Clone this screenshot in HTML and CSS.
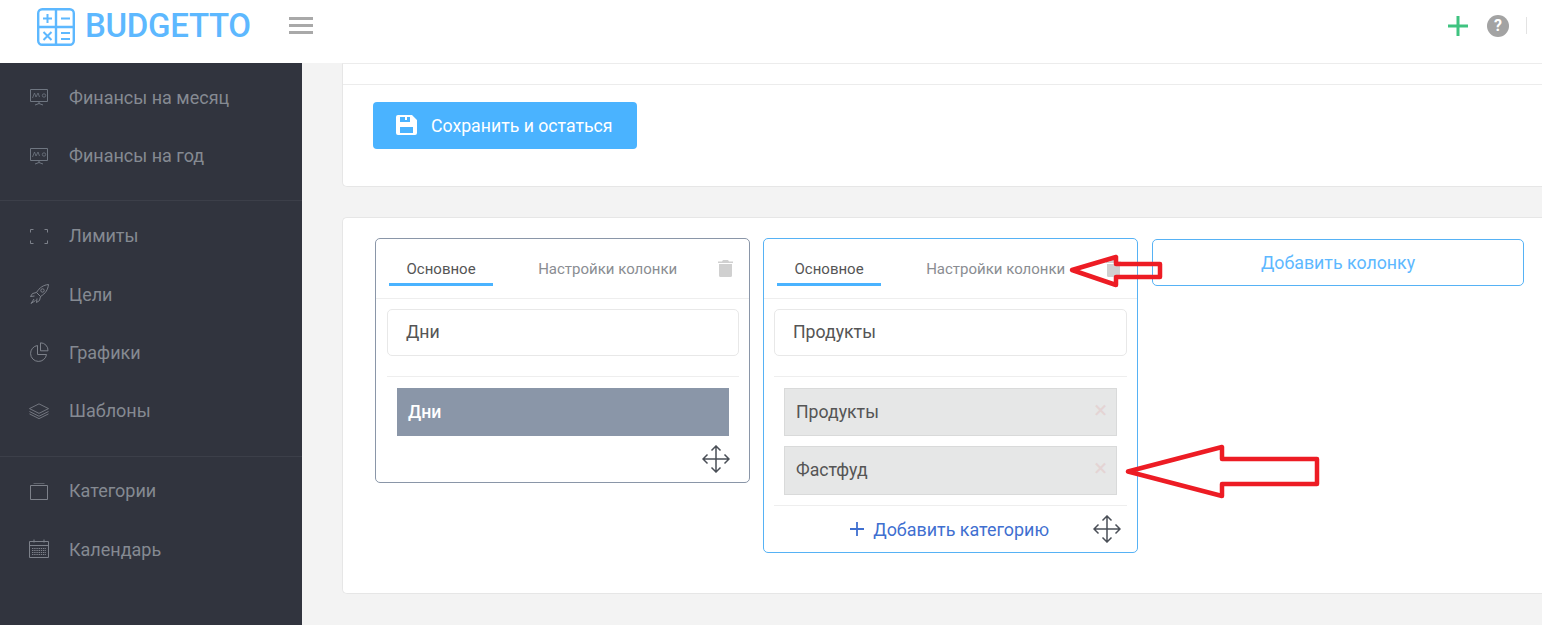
FILE: index.html
```html
<!DOCTYPE html>
<html lang="ru">
	<head>
		<meta charset="utf-8">
		<title>Budgetto</title>
		<link rel="stylesheet" href="styles.css">
	</head>
	<body>
		<header class="topbar">
			<svg class="logo-icon" width="38" height="38" viewBox="0 0 38 38" fill="none" stroke="#5db8ff" stroke-width="2.4">
				<rect x="1.2" y="1.2" width="35.6" height="35.6" rx="4"/>
				<path d="M19 1v36M1 19h36"/>
				<path d="M6 10.500h9M10.500 6v9M24 10.500h9M6.500 24l8 8M14.500 24l-8 8M24 25h9M24 31h9" stroke-width="2"/>
			</svg>
			<span class="logo-text">BUDGETTO</span>
			<div class="burger"><i></i><i></i><i></i></div>
			<div class="topbar-right">
				<svg width="20" height="20" viewBox="0 0 20 20" fill="none" stroke="#3fc380" stroke-width="3"><path d="M10 0v20M0 10h20"/></svg>
				<span class="help">?</span>
				<span class="topbar-sep"></span>
			</div>
		</header>

		<div class="shell">
			<aside class="sidebar">
				<nav class="nav-group first">
					<a class="nav-item">
						<svg class="nav-icon" width="20" height="20" viewBox="0 0 20 20" fill="none" stroke="#6f7681"><path d="M1.500 2.500h17v12h-17zM10 14.500v2M6 18l4-1.500 4 1.500"/><path d="M3.500 11l2-5 1.500 4 2-4 1.500 4" stroke-width=".8"/><circle cx="15" cy="8.500" r="1.700" stroke-width=".8"/></svg>
						<span>Финансы на месяц</span>
					</a>
					<a class="nav-item">
						<svg class="nav-icon" width="20" height="20" viewBox="0 0 20 20" fill="none" stroke="#6f7681"><path d="M1.500 2.500h17v12h-17zM10 14.500v2M6 18l4-1.500 4 1.500"/><path d="M3.500 11l2-5 1.500 4 2-4 1.500 4" stroke-width=".8"/><circle cx="15" cy="8.500" r="1.700" stroke-width=".8"/></svg>
						<span>Финансы на год</span>
					</a>
				</nav>
				<nav class="nav-group">
					<a class="nav-item">
						<svg class="nav-icon" width="20" height="20" viewBox="0 0 20 20" fill="none" stroke="#7d818a"><path d="M4.500 3.500h-3v3M15.500 3.500h3v3M4.500 17.500h-3v-3M15.500 17.500h3v-3"/></svg>
						<span>Лимиты</span>
					</a>
					<a class="nav-item">
						<svg class="nav-icon" width="20" height="20" viewBox="0 0 20 20" fill="none" stroke="#7d818a"><path d="M19.500.500c-5 .5-9 3-12 8l4 4c5-3 7.500-7 8-12zM7.500 8.500l-4 1-2 3 4-.5M11.500 12.500l-1 4-3 2 .5-4M5 15l-3 4.500 4.500-3"/><circle cx="13.500" cy="6.500" r="1.700"/></svg>
						<span>Цели</span>
					</a>
					<a class="nav-item">
						<svg class="nav-icon" width="20" height="20" viewBox="0 0 20 20" fill="none" stroke="#7d818a"><path d="M8.500 3.500a8 8 0 1 0 9 9h-9z"/><path d="M11.500 .800a7.500 7.500 0 0 1 7.500 8h-7.500z"/></svg>
						<span>Графики</span>
					</a>
					<a class="nav-item">
						<svg class="nav-icon" width="20" height="20" viewBox="0 0 21 20" fill="none" stroke="#7d818a" stroke-width=".9"><path d="M10.500 2.500l10 5-10 5-10-5zM.500 10.500l10 5 10-5M.500 13l10 5 10-5"/></svg>
						<span>Шаблоны</span>
					</a>
				</nav>
				<nav class="nav-group last">
					<a class="nav-item">
						<svg class="nav-icon" width="20" height="20" viewBox="0 0 20 20" fill="none" stroke="#7d818a"><path d="M1.500 4.500h17v14h-17z"/><path d="M4.500 2.500h11" stroke="#5f636c"/></svg>
						<span>Категории</span>
					</a>
					<a class="nav-item">
						<svg class="nav-icon" width="20" height="20" viewBox="0 0 20 20" fill="none" stroke="#7d818a"><path d="M.500 2.500h19v16H.500zM.500 6.500h19M5 .5v3M15 .5v3"/><path d="M3 9.500h14M3 11.500h14M3 13.500h14M3 15.500h14" stroke-dasharray="1.400 .8"/></svg>
						<span>Календарь</span>
					</a>
				</nav>
			</aside>

			<main class="content">
				<section class="panel panel-save">
					<div class="panel-strip"></div>
					<button class="btn-save">
						<svg width="21" height="20" viewBox="0 0 21 20" fill="#fff"><path fill-rule="evenodd" d="M2 0h14l5 5v13a2 2 0 0 1-2 2H2a2 2 0 0 1-2-2V2a2 2 0 0 1 2-2zm2 2v5h10V2h-3v3H9V2zm0 10v6h13v-6z"/></svg>
						Сохранить и остаться
					</button>
				</section>

				<section class="panel panel-columns">
					<div class="column column-slate">
						<div class="tabs">
							<span class="tab active">Основное</span>
							<span class="tab">Настройки колонки</span>
							<svg class="trash" width="15" height="17" viewBox="0 0 15 17" fill="#d0d0d0"><path d="M5 0h5l1 1.500h4V3H0V1.500h4zM1 4h13v11.500a1.500 1.500 0 0 1-1.500 1.500h-10A1.500 1.500 0 0 1 1 15.500z"/></svg>
						</div>
						<div class="column-body">
							<div class="name-field">Дни</div>
							<hr class="rule">
							<div class="rows">
								<div class="row row-main">Дни</div>
							</div>
							<div class="column-foot compact">
								<svg class="move" width="28" height="28" viewBox="0 0 28 28" fill="none" stroke="#4a4f57" stroke-width="1.500"><path d="M14 1v26M1 14h26M9.500 5.500L14 1l4.500 4.500M9.500 22.500L14 27l4.500-4.500M5.500 9.500L1 14l4.500 4.500M22.500 9.500L27 14l-4.500 4.500"/></svg>
							</div>
						</div>
					</div>

					<div class="column column-blue">
						<div class="tabs">
							<span class="tab active">Основное</span>
							<span class="tab">Настройки колонки</span>
							<svg class="trash" width="15" height="17" viewBox="0 0 15 17" fill="#d0d0d0"><path d="M5 0h5l1 1.500h4V3H0V1.500h4zM1 4h13v11.500a1.500 1.500 0 0 1-1.500 1.500h-10A1.500 1.500 0 0 1 1 15.500z"/></svg>
						</div>
						<div class="column-body">
							<div class="name-field">Продукты</div>
							<hr class="rule">
							<div class="rows">
								<div class="row">Продукты<span class="row-x">×</span></div>
								<div class="row">Фастфуд<span class="row-x">×</span></div>
							</div>
							<hr class="rule rule-foot">
							<div class="column-foot">
								<a class="add-category">
									<svg class="add-plus" width="14" height="14" viewBox="0 0 14 14" fill="none" stroke="#3f6fd0" stroke-width="1.800"><path d="M7 0v14M0 7h14"/></svg>
									Добавить категорию
								</a>
								<svg class="move" width="28" height="28" viewBox="0 0 28 28" fill="none" stroke="#4a4f57" stroke-width="1.500"><path d="M14 1v26M1 14h26M9.500 5.500L14 1l4.500 4.500M9.500 22.500L14 27l4.500-4.500M5.500 9.500L1 14l4.500 4.500M22.500 9.500L27 14l-4.500 4.500"/></svg>
							</div>
						</div>
					</div>

					<button class="btn-add-column">Добавить колонку</button>
				</section>
			</main>
		</div>

		<!-- red arrows drawn on top of the screenshot -->
		<svg class="annotations" width="1542" height="625" viewBox="0 0 1542 625" fill="none" stroke="#ed1c24" stroke-width="4.500" stroke-linejoin="round">
			<path d="M1072 270L1116 257V264H1160V277H1116V285z"/>
			<path d="M1128 471.500L1222 447V459H1317V484H1222V496z"/>
		</svg>
	</body>
</html>
```

FILE: styles.css
```css
* {
	box-sizing: border-box;
	padding: 0;
	margin: 0;
}
html, body {
	height: 100%;
	overflow: hidden;
}
body {
	position: relative;
	background-color: #f3f3f3;
	font-family: Roboto, "Liberation Sans", sans-serif;
	color: #555;
}

/* top bar */
.topbar {
	display: flex;
	align-items: center;
	height: 63px;
	padding-left: 37px;
	background-color: #fff;
}
.logo-icon {
	margin-top: -10px;
}
.logo-text {
	margin: -13px 0 0 10px;
	color: #5db8ff;
	font-size: 33px;
	font-weight: 500;
	letter-spacing: -.3px;
}
.burger {
	display: flex;
	flex-direction: column;
	gap: 4px;
	width: 24px;
	margin: -13px 0 0 38px;
}
.burger i {
	display: block;
	height: 3px;
	background-color: #a9a9a9;
}
.topbar-right {
	display: flex;
	align-items: center;
	margin: -12px 0 0 auto;
}
.help {
	width: 22px;
	height: 22px;
	margin-left: 19px;
	border-radius: 50%;
	background-color: #a3a3a3;
	color: #fff;
	font-size: 16px;
	font-weight: 700;
	line-height: 22px;
	text-align: center;
}
.topbar-sep {
	width: 1px;
	height: 17px;
	margin: 0 15px 0 17px;
	background-color: #e3e3e3;
}

/* sidebar */
.shell {
	display: flex;
	height: 562px;
}
.sidebar {
	flex: 0 0 302px;
	background-color: #31343e;
}
.nav-group {
	padding: 5.700px 0 16.300px;
	border-bottom: 1px solid #3c3f49;
}
.nav-group.first {
	padding: 5.200px 0 14.800px;
}
.nav-group.last {
	padding-top: 4.400px;
	border-bottom: 0;
}
.nav-item {
	display: flex;
	align-items: center;
	height: 58.4px;
	padding-left: 29px;
	color: #858a92;
	font-size: 18px;
}
.nav-icon {
	flex: none;
	margin-right: 20px;
}
.nav-item span {
	white-space: nowrap;
}

/* main area */
.content {
	flex: 1;
	padding-left: 40px;
	overflow: hidden;
}
.panel {
	border: 1px solid #e6e6e6;
	border-right: 0;
	background-color: #fff;
}
.panel-save {
	height: 124px;
	border-top: 1px solid #ececec;
	border-radius: 0 0 0 5px;
}
.panel-strip {
	height: 21px;
	border-bottom: 1px solid #ececec;
}
.btn-save {
	display: flex;
	align-items: center;
	gap: 14px;
	width: 264px;
	height: 47px;
	margin: 17px 0 0 30px;
	padding-left: 23px;
	border: 0;
	border-radius: 4px;
	background-color: #4ab3ff;
	color: #fff;
	font-family: inherit;
	font-size: 17.700px;
}
.btn-save svg {
	margin-top: -2px;
}
.panel-columns {
	display: flex;
	align-items: flex-start;
	height: 377px;
	margin-top: 30px;
	padding: 20px 0 0 32px;
	border-radius: 5px 0 0 5px;
}

/* columns */
.column {
	width: 375px;
	margin-right: 13px;
	border: 1px solid;
	border-radius: 5px;
	background-color: #fff;
}
.column-slate {
	border-color: #8a96a8;
}
.column-blue {
	margin-right: 14px;
	border-color: #56b2f5;
}
.tabs {
	display: flex;
	align-items: flex-start;
	height: 60px;
	padding: 19px 0 0 13px;
	border-bottom: 1px solid #eee;
}
.tab {
	height: 28px;
	padding: 2px 17px 0;
	color: #8a8d92;
	font-size: 15px;
	white-space: nowrap;
}
.tab.active {
	margin-right: 28px;
	padding: 2px 17.500px 0;
	border-bottom: 3px solid #4ab3ff;
	color: #555;
}
.trash {
	margin: 2px 0 0 24px;
}
.column-body {
	padding: 10px 10px 0 11px;
}
.column-blue .column-body {
	padding-left: 10px;
}
.name-field {
	height: 47px;
	padding-left: 18px;
	border: 1px solid #e8e8e8;
	border-radius: 5px;
	font-size: 17.700px;
	line-height: 45px;
}
.rule {
	height: 1px;
	margin-top: 20px;
	border: 0;
	background-color: #eee;
}
.rule-foot {
	margin-top: 10px;
}
.rows {
	display: flex;
	flex-direction: column;
	gap: 10px;
	padding: 11px 10px 0;
}
.row {
	position: relative;
	height: 48px;
	padding-left: 11px;
	border: 1px solid #d9dada;
	background-color: #e6e7e7;
	font-size: 17.700px;
	line-height: 46px;
}
.row + .row {
	height: 49px;
}
.row-main {
	padding-left: 10px;
	border-color: #8a96a8;
	background-color: #8a96a8;
	color: #fff;
	font-weight: 500;
}
.row-x {
	position: absolute;
	top: -2px;
	right: 9px;
	color: #e4d4d4;
	font-size: 24px;
}
.column-foot {
	display: flex;
	align-items: center;
	justify-content: flex-end;
	height: 46px;
	padding: 0 6px 0 0;
}
.column-foot.compact {
	padding: 0 9px 1px 0;
}
.add-category {
	display: flex;
	align-items: center;
	margin-right: 44px;
	color: #3f6fd0;
	font-size: 17.900px;
}
.add-plus {
	margin-right: 9px;
}
.btn-add-column {
	width: 372px;
	height: 47px;
	margin-top: 1px;
	border: 1px solid #56b2f5;
	border-radius: 5px;
	background-color: #fff;
	color: #5db8ff;
	font-family: inherit;
	font-size: 17.800px;
}

/* arrows */
.annotations {
	position: absolute;
	top: 0;
	left: 0;
	pointer-events: none;
}
```
